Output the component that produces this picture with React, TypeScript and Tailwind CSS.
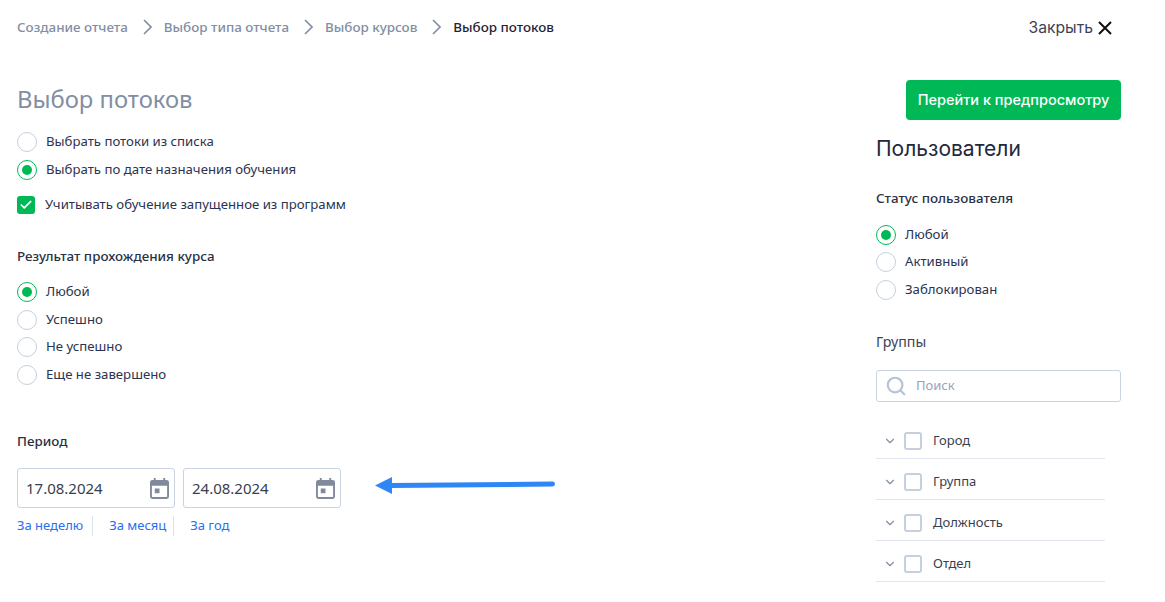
import { ChevronDown, Check, Search } from 'lucide-react'

const crumbs = ['Создание отчета', 'Выбор типа отчета', 'Выбор курсов']
const groups = ['Город', 'Группа', 'Должность', 'Отдел']

function Radio({ label, checked = false }: { label: string; checked?: boolean }) {
  return (
    <div className="flex h-[27.5px] items-center gap-[9px]">
      <span
        className={`flex h-5 w-5 items-center justify-center rounded-full border bg-white ${
          checked ? 'border-[#00b956]' : 'border-[#c5d0de]'
        }`}
      >
        {checked && <span className="h-[10px] w-[10px] rounded-full bg-[#00b956]" />}
      </span>
      <span className="text-[13.2px] text-[#2b3350]">{label}</span>
    </div>
  )
}

function CalendarIcon() {
  return (
    <svg width="19" height="21" viewBox="0 0 20 22" fill="#818a9c">
      <path d="M4 0h2v2h8V0h2v2h1.5A2.5 2.5 0 0 1 20 4.5v15a2.5 2.5 0 0 1-2.5 2.5h-15A2.5 2.5 0 0 1 0 19.5v-15A2.5 2.5 0 0 1 2.5 2H4V0Zm-2 8v11.5c0 .3.2.5.5.5h15c.3 0 .5-.2.5-.5V8H2Zm3 3h5v5H5v-5Z" fillRule="evenodd" />
    </svg>
  )
}

function DateField({ value }: { value: string }) {
  return (
    <div className="flex h-10 w-[158px] items-center justify-between rounded-[3px] border border-[#c9d4e3] pl-2 pr-[5px]">
      <span className="text-[15px] text-[#3a3f4d]">{value}</span>
      <CalendarIcon />
    </div>
  )
}

export default function App() {
  return (
    <div className="relative h-[602px] w-[1165px] overflow-hidden bg-white font-['Noto_Sans',sans-serif]">
      <div className="flex h-[56px] items-center justify-between pl-[17px] pr-[53px]">
        <div className="-mt-[1px] flex items-center text-[13.4px] font-medium text-[#818ea3]">
          {crumbs.map((c) => (
            <div key={c} className="flex items-center">
              <span>{c}</span>
              <svg className="ml-[15px] mr-[12px]" width="9" height="16" viewBox="0 0 9 16" fill="none" stroke="#818ea3" strokeWidth="1.6">
                <path d="M1 1l7 7-7 7" />
              </svg>
            </div>
          ))}
          <span className="text-[#1f2433]">Выбор потоков</span>
        </div>
        <div className="flex items-center gap-[5px] font-['Inter',sans-serif] text-[15.7px] text-[#3c4356]">
          <span>Закрыть</span>
          <svg width="14" height="14" viewBox="0 0 14 14" fill="none" stroke="#111" strokeWidth="2">
            <path d="M1 1l12 12M13 1L1 13" />
          </svg>
        </div>
      </div>

      <div className="flex justify-between pl-[17px] pr-[44px]">
        <div>
          <h1 className="mt-[26px] text-[23.8px] leading-[34px] text-[#818ea3]">Выбор потоков</h1>
          <div className="mt-[12.5px]">
            <Radio label="Выбрать потоки из списка" />
            <Radio label="Выбрать по дате назначения обучения" checked />
          </div>
          <div className="mt-[11.5px] flex items-center gap-[10px]">
            <span className="flex h-[18px] w-[18px] items-center justify-center rounded-[3px] bg-[#00b956]">
              <Check size={14} strokeWidth={3} className="text-white" />
            </span>
            <span className="text-[13.2px] text-[#2b3350]">Учитывать обучение запущенное из программ</span>
          </div>

          <h3 className="mt-[31px] text-[13.4px] font-medium text-[#2b3044]">Результат прохождения курса</h3>
          <div className="mt-[12.5px]">
            <Radio label="Любой" checked />
            <Radio label="Успешно" />
            <Radio label="Не успешно" />
            <Radio label="Еще не завершено" />
          </div>

          <h3 className="mt-[42.5px] text-[13.4px] font-medium text-[#2b3044]">Период</h3>
          <div className="mt-[17px] flex gap-2">
            <DateField value="17.08.2024" />
            <DateField value="24.08.2024" />
          </div>
          <div className="mt-[8px] flex h-[20px] items-center text-[13px] text-[#2a6ff0]">
            <span className="border-r border-[#dde3ec] pr-[9px]">За неделю</span>
            <span className="border-r border-[#dde3ec] pl-4 pr-[7px]">За месяц</span>
            <span className="pl-4">За год</span>
          </div>
        </div>

        <div className="flex w-[245px] flex-col">
          <button className="ml-[30px] mt-[24px] flex h-10 w-[215px] items-center justify-center rounded-[4px] bg-[#00b956] font-['Inter',sans-serif] text-[14.5px] font-medium text-white">
            Перейти к предпросмотру
          </button>
          <h2 className="mt-[14px] font-['Inter',sans-serif] text-[21px] leading-[30px] text-[#23283a]">Пользователи</h2>
          <h3 className="mt-[24px] text-[13.4px] font-medium text-[#2b3044]">Статус пользователя</h3>
          <div className="mt-[13px]">
            <Radio label="Любой" checked />
            <Radio label="Активный" />
            <Radio label="Заблокирован" />
          </div>
          <h3 className="mt-[27px] text-[14.2px] text-[#3c4356]">Группы</h3>
          <div className="mt-[18px] flex h-8 items-center rounded-[3px] border border-[#c9d4e3] pl-[8px]">
            <Search size={22} strokeWidth={2.4} className="text-[#b6c4d4]" />
            <span className="ml-[9px] text-[13px] text-[#94a3b8]">Поиск</span>
          </div>
          <div className="mt-[16px] w-[229px]">
            {groups.map((g) => (
              <div key={g} className="flex h-[41px] items-center border-b border-[#e1e6ee] pl-[7px] pt-[6px]">
                <ChevronDown size={14} strokeWidth={2} className="text-[#818ea3]" />
                <span className="ml-[7px] h-[18px] w-[18px] rounded-[3px] border-2 border-[#c5d0de]" />
                <span className="ml-[11px] text-[13px] text-[#3a3f4d]">{g}</span>
              </div>
            ))}
          </div>
        </div>
      </div>

      {/* annotation arrow drawn over the screenshot */}
      <svg className="absolute left-[374px] top-[474px]" width="184" height="22" viewBox="0 0 184 22">
        <path d="M16 11.5 L178.5 10" stroke="#2f86f5" strokeWidth="5" strokeLinecap="round" fill="none" />
        <path d="M1 11.5 L18 3 L18 20 Z" fill="#2f86f5" />
      </svg>
    </div>
  )
}
